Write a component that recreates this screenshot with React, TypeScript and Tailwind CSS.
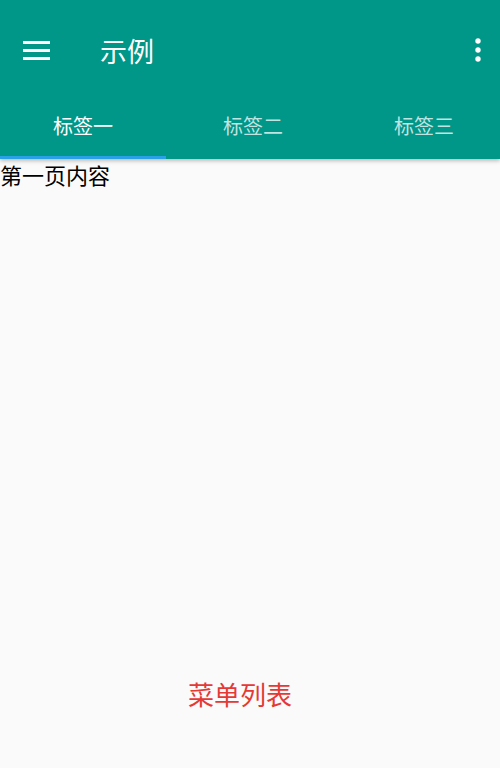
import React from "react";

const font = { fontFamily: '"Noto Sans CJK SC", "Noto Sans", sans-serif' };

export default function App() {
  return (
    <div className="w-[500px] h-[768px] bg-[#fafafa] flex flex-col" style={font}>
      <div className="bg-[#009688] shadow-[0_2px_4px_rgba(0,0,0,0.25)] relative z-10">
        <div className="h-[92px] pt-[8px] flex items-center">
          <div className="w-[73px] pl-[23px] flex items-center">
            <svg width="27" height="21" viewBox="0 0 27 21">
              <rect x="0" y="1" width="27" height="3" fill="#fff" />
              <rect x="0" y="9" width="27" height="3" fill="#fff" />
              <rect x="0" y="17" width="27" height="3" fill="#fff" />
            </svg>
          </div>
          <div className="flex-1 pl-[27px] text-white text-[27px] leading-none">示例</div>
          <div className="w-[40px] flex justify-center pr-[4px] ml-auto">
            <svg width="8" height="24" viewBox="0 0 8 24">
              <circle cx="4" cy="3" r="2.7" fill="#fff" />
              <circle cx="4" cy="12" r="2.7" fill="#fff" />
              <circle cx="4" cy="21" r="2.7" fill="#fff" />
            </svg>
          </div>
        </div>
        <div className="h-[67px] flex">
          <div className="w-[166px] relative flex items-center justify-center text-white text-[20px]">
            标签一
            <div className="absolute left-0 right-0 bottom-0 h-[3px] bg-[#2aa1e6]" />
          </div>
          <div className="w-[174px] flex items-center justify-center text-white/75 text-[20px]">标签二</div>
          <div className="flex-1 pl-[8px] flex items-center justify-center text-white/75 text-[20px]">标签三</div>
        </div>
      </div>
      <div className="flex-1 flex flex-col">
        <div className="text-black text-[22px] leading-[32px] -mt-[1px]">第一页内容</div>
        <div className="flex-1" />
        <div className="flex justify-center pb-[54px] pr-[20px] text-[#e53935] text-[26px] leading-[40px]">菜单列表</div>
      </div>
    </div>
  );
}
